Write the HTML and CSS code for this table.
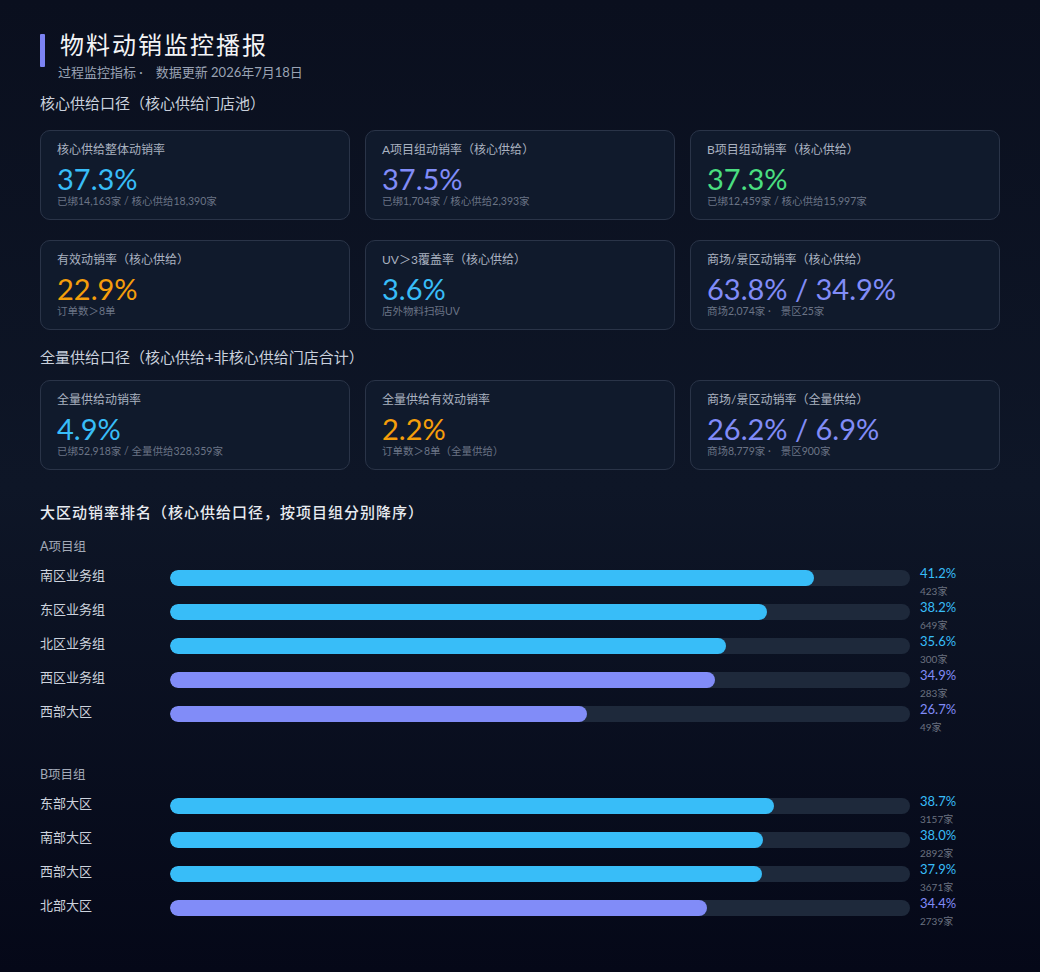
FILE: index.html
```html
<!DOCTYPE html>
<html lang="zh-CN">
<head>
<meta charset="utf-8">
<title>物料动销监控播报</title>
<link rel="stylesheet" href="styles.css">
</head>
<body>
<div class="page">
  <header class="header">
    <div class="accent"></div>
    <div class="head-text">
      <h1 class="title">物料动销监控播报</h1>
      <div class="subtitle">过程监控指标 ·<span class="sep"></span>数据更新 2026年7月18日</div>
    </div>
  </header>

  <h2 class="section">核心供给口径（核心供给门店池）</h2>
  <div class="grid">
    <div class="card"><div class="c-label">核心供给整体动销率</div><div class="c-value cyan">37.3%</div><div class="c-sub">已绑14,163家 / 核心供给18,390家</div></div>
    <div class="card"><div class="c-label">A项目组动销率（核心供给）</div><div class="c-value indigo">37.5%</div><div class="c-sub">已绑1,704家 / 核心供给2,393家</div></div>
    <div class="card"><div class="c-label">B项目组动销率（核心供给）</div><div class="c-value green">37.3%</div><div class="c-sub">已绑12,459家 / 核心供给15,997家</div></div>
    <div class="card"><div class="c-label">有效动销率（核心供给）</div><div class="c-value amber">22.9%</div><div class="c-sub">订单数＞8单</div></div>
    <div class="card"><div class="c-label">UV＞3覆盖率（核心供给）</div><div class="c-value cyan">3.6%</div><div class="c-sub">店外物料扫码UV</div></div>
    <div class="card"><div class="c-label">商场/景区动销率（核心供给）</div><div class="c-value indigo">63.8% / 34.9%</div><div class="c-sub">商场2,074家 ·<span class="sep-s"></span>景区25家</div></div>
  </div>

  <h2 class="section section-2">全量供给口径（核心供给+非核心供给门店合计）</h2>
  <div class="grid">
    <div class="card"><div class="c-label">全量供给动销率</div><div class="c-value cyan">4.9%</div><div class="c-sub">已绑52,918家 / 全量供给328,359家</div></div>
    <div class="card"><div class="c-label">全量供给有效动销率</div><div class="c-value amber">2.2%</div><div class="c-sub">订单数＞8单（全量供给）</div></div>
    <div class="card"><div class="c-label">商场/景区动销率（全量供给）</div><div class="c-value indigo">26.2% / 6.9%</div><div class="c-sub">商场8,779家 ·<span class="sep-s"></span>景区900家</div></div>
  </div>

  <h2 class="rank-title">大区动销率排名（核心供给口径，按项目组分别降序）</h2>

  <div class="group">
    <div class="g-label">A项目组</div>
    <div class="rows">
      <div class="row"><div class="r-label">南区业务组</div><div class="track"><div class="fill cyan-bg" style="width:86.96%"></div></div><div class="r-val"><div class="pct cyan">41.2%</div><div class="cnt">423家</div></div></div>
      <div class="row"><div class="r-label">东区业务组</div><div class="track"><div class="fill cyan-bg" style="width:80.63%"></div></div><div class="r-val"><div class="pct cyan">38.2%</div><div class="cnt">649家</div></div></div>
      <div class="row"><div class="r-label">北区业务组</div><div class="track"><div class="fill cyan-bg" style="width:75.14%"></div></div><div class="r-val"><div class="pct cyan">35.6%</div><div class="cnt">300家</div></div></div>
      <div class="row"><div class="r-label">西区业务组</div><div class="track"><div class="fill indigo-bg" style="width:73.66%"></div></div><div class="r-val"><div class="pct indigo">34.9%</div><div class="cnt">283家</div></div></div>
      <div class="row"><div class="r-label">西部大区</div><div class="track"><div class="fill indigo-bg" style="width:56.35%"></div></div><div class="r-val"><div class="pct indigo">26.7%</div><div class="cnt">49家</div></div></div>
    </div>
  </div>

  <div class="group group-b">
    <div class="g-label">B项目组</div>
    <div class="rows">
      <div class="row"><div class="r-label">东部大区</div><div class="track"><div class="fill cyan-bg" style="width:81.68%"></div></div><div class="r-val"><div class="pct cyan">38.7%</div><div class="cnt">3157家</div></div></div>
      <div class="row"><div class="r-label">南部大区</div><div class="track"><div class="fill cyan-bg" style="width:80.20%"></div></div><div class="r-val"><div class="pct cyan">38.0%</div><div class="cnt">2892家</div></div></div>
      <div class="row"><div class="r-label">西部大区</div><div class="track"><div class="fill cyan-bg" style="width:79.99%"></div></div><div class="r-val"><div class="pct cyan">37.9%</div><div class="cnt">3671家</div></div></div>
      <div class="row"><div class="r-label">北部大区</div><div class="track"><div class="fill indigo-bg" style="width:72.60%"></div></div><div class="r-val"><div class="pct indigo">34.4%</div><div class="cnt">2739家</div></div></div>
    </div>
  </div>
</div>
</body>
</html>
```

FILE: styles.css
```css
* { box-sizing: border-box; }
html, body { margin: 0; padding: 0; }
body {
  min-height: 972px;
  background: linear-gradient(180deg, #0a0f1e 0%, #0e1627 50%, #050818 100%);
  font-family: "Lato", "Noto Sans CJK SC", sans-serif;
  color: #cbd5e1;
}
.page {
  width: 1040px;
  padding: 27px 40px 30px;
}
.header {
  display: flex;
  align-items: flex-start;
  gap: 15px;
}
.accent {
  width: 5px;
  height: 33px;
  margin-top: 7px;
  background: #7c83f3;
  border-radius: 1px;
}
.title {
  margin: 0;
  font-size: 24px;
  line-height: 36px;
  font-weight: 400;
  color: #f3f4f6;
  letter-spacing: 2px;
}
.subtitle {
  margin-left: -2px;
  font-size: 13px;
  line-height: 18px;
  color: #9aa3b4;
}
.sep { display: inline-block; width: 13px; }
.sep-s { display: inline-block; width: 10px; }
.section {
  margin: 11px 0 16px;
  font-size: 15px;
  line-height: 22px;
  font-weight: 400;
  color: #c9d0dc;
}
.section-2 { margin: 16px 0 12px; }
.grid {
  display: grid;
  grid-template-columns: repeat(3, 1fr);
  column-gap: 15px;
  row-gap: 20px;
}
.card {
  height: 90px;
  padding: 10px 16px 12px;
  background: #101a2c;
  border: 1px solid #2a3448;
  border-radius: 10px;
}
.c-label {
  font-size: 12px;
  line-height: 18px;
  color: #aab2c0;
}
.c-value {
  margin-top: 5px;
  font-size: 29px;
  line-height: 30px;
  font-weight: 400;
}
.c-sub {
  font-size: 10.5px;
  line-height: 14px;
  color: #6b7486;
}
.cyan { color: #38bdf8; }
.indigo { color: #818cf8; }
.green { color: #4ade80; }
.amber { color: #f59e0b; }
.cyan-bg { background: #38bdf8; }
.indigo-bg { background: #818cf8; }

.rank-title {
  margin: 31px 0 0;
  font-size: 15px;
  line-height: 22px;
  font-weight: 500;
  color: #e8ebf0;
  letter-spacing: 1px;
}
.group { margin-top: 15px; }
.group-b { margin-top: 30px; }
.g-label {
  font-size: 12.5px;
  line-height: 18px;
  color: #a3aab8;
}
.rows {
  margin-top: 10px;
  display: flex;
  flex-direction: column;
}
.row {
  height: 34px;
  display: flex;
  align-items: flex-start;
}
.r-label {
  width: 130px;
  flex: none;
  font-size: 13px;
  line-height: 18px;
  color: #cdd3dd;
}
.track {
  flex: 1;
  height: 16px;
  margin-top: 4px;
  background: #1e293b;
  border-radius: 8px;
  overflow: hidden;
}
.fill {
  height: 100%;
  border-radius: 8px;
}
.r-val {
  width: 80px;
  flex: none;
  margin-left: 10px;
}
.pct {
  font-size: 13px;
  line-height: 14px;
}
.cnt {
  margin-top: 5px;
  font-size: 10px;
  line-height: 12px;
  color: #6b7280;
}
```
